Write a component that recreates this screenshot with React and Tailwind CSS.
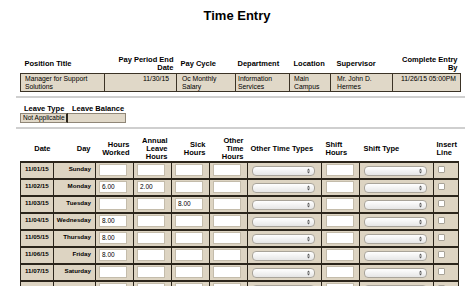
const font = { fontFamily: '"Liberation Sans", Arial, sans-serif' };

const infoCols = [
  { label: "Position Title", value: "Manager for Support Solutions", w: 84, head: "text-left pl-[4px]", cell: "text-left pl-[4px]" },
  { label: "Pay Period End Date", value: "11/30/15", w: 72, head: "text-right pr-[3px]", cell: "text-right pr-[7px]" },
  { label: "Pay Cycle", value: "Oc Monthly Salary", w: 59, head: "text-left pl-[4px]", cell: "text-left pl-[5px]" },
  { label: "Department", value: "Information Services", w: 54, head: "text-left pl-[2px]", cell: "text-left pl-[2px]" },
  { label: "Location", value: "Main Campus", w: 41, head: "text-left pl-[4px]", cell: "text-left pl-[4px]" },
  { label: "Supervisor", value: "Mr. John D. Hermes", w: 62, head: "text-left pl-[6px]", cell: "text-left pl-[6px]" },
  { label: "Complete Entry By", value: "11/26/15 05:00PM", w: 68, head: "text-right pr-[3px]", cell: "text-right pr-[4px]" },
];

const rows = [
  { date: "11/01/15", day: "Sunday" },
  { date: "11/02/15", day: "Monday", worked: "6.00", annual: "2.00" },
  { date: "11/03/15", day: "Tuesday", sick: "8.00" },
  { date: "11/04/15", day: "Wednesday", worked: "8.00" },
  { date: "11/05/15", day: "Thursday", worked: "8.00" },
  { date: "11/06/15", day: "Friday", worked: "8.00" },
  { date: "11/07/15", day: "Saturday" },
  { date: "11/08/15", day: "Sunday" },
];

function Box({ value }) {
  return (
    <div className="w-[28px] h-[12px] bg-white border border-[#c4bcab] pl-[2px] text-[6.5px] leading-[10px] font-normal text-black">
      {value || ""}
    </div>
  );
}

function Select() {
  return (
    <div className="w-[63px] h-[10px] mt-[2px] rounded-[4px] border border-[#a9a49a] bg-gradient-to-b from-white to-[#e6e6e6] flex items-center justify-end pr-[4px]">
      <svg width="3" height="6" viewBox="0 0 3 6">
        <path d="M0 2.4 L1.5 0.6 L3 2.4 Z M0 3.6 L1.5 5.4 L3 3.6 Z" fill="#555" />
      </svg>
    </div>
  );
}

const cell = "bg-[#ddd4c2] border-x border-[#2b251b] border-y-2 align-top";

export default function App() {
  return (
    <div className="w-[474px] h-[286px] overflow-hidden bg-white text-black" style={font}>
      <h1 className="text-center text-[13px] leading-[15px] font-bold pt-[8px] h-[56px]">Time Entry</h1>

      <table className="ml-[20px] border-collapse table-fixed w-[440px]">
        <colgroup>
          {infoCols.map((c) => (
            <col key={c.label} style={{ width: c.w }} />
          ))}
        </colgroup>
        <thead>
          <tr className="h-[17px]">
            {infoCols.map((c) => (
              <th key={c.label} className={`${c.head} align-middle text-[7.5px] leading-[8px] font-bold`}>
                {c.label}
              </th>
            ))}
          </tr>
        </thead>
        <tbody>
          <tr className="h-[18px]">
            {infoCols.map((c) => (
              <td
                key={c.label}
                className={`${c.cell} bg-[#e0d8c8] border border-[#3b3326] align-top pt-[1px] text-[6.8px] leading-[8px]`}
              >
                {c.value}
              </td>
            ))}
          </tr>
        </tbody>
      </table>

      <div className="ml-[16px] w-[449px] h-[2px] bg-[#cfcfcf] mt-[4px]" />

      <div className="ml-[20px] mt-[6px] flex text-[7.5px] leading-[9px] font-bold">
        <div className="w-[48px] pl-[4px]">Leave Type</div>
        <div className="pl-[4px]">Leave Balance</div>
      </div>
      <div className="ml-[20px] flex h-[10px]">
        <div className="w-[48px] bg-[#e0d8c8] border border-[#8f8677] border-r-2 border-r-[#2b251b] pl-[2px] text-[6.5px] leading-[8px] whitespace-nowrap">
          Not Applicable
        </div>
        <div className="w-[58px] bg-[#e0d8c8] border border-[#8f8677] border-l-0" />
      </div>

      <div className="ml-[16px] w-[449px] h-[2px] bg-[#cfcfcf] mt-[4px]" />

      <table className="ml-[20px] mt-[8px] border-collapse table-fixed w-[438px]">
        <colgroup>
          <col style={{ width: 33 }} />
          <col style={{ width: 42 }} />
          <col style={{ width: 38 }} />
          <col style={{ width: 38 }} />
          <col style={{ width: 38 }} />
          <col style={{ width: 38 }} />
          <col style={{ width: 74 }} />
          <col style={{ width: 38 }} />
          <col style={{ width: 74 }} />
          <col style={{ width: 25 }} />
        </colgroup>
        <thead>
          <tr className="h-[24px] text-[7.5px] leading-[8px] font-bold">
            <th className="text-right pr-[3px] align-middle">Date</th>
            <th className="text-right pr-[5px] align-middle">Day</th>
            <th className="text-right pr-[4px] align-middle">Hours<br />Worked</th>
            <th className="text-right pr-[4px] align-middle">Annual<br />Leave<br />Hours</th>
            <th className="text-right pr-[4px] align-middle">Sick<br />Hours</th>
            <th className="text-right pr-[4px] align-middle">Other<br />Time<br />Hours</th>
            <th className="text-left pl-[3px] align-middle">Other Time Types</th>
            <th className="text-left pl-[4px] align-middle">Shift<br />Hours</th>
            <th className="text-left pl-[4px] align-middle">Shift Type</th>
            <th className="text-left pl-[3px] align-middle">Insert<br />Line</th>
          </tr>
        </thead>
        <tbody>
          {rows.map((r) => (
            <tr key={r.date} className="h-[17px]">
              <td className={`${cell} pl-[4px] pt-[2px] text-[6.2px] leading-[8px] font-bold`}>{r.date}</td>
              <td className={`${cell} pr-[4px] pt-[2px] text-right text-[6.2px] leading-[8px] font-bold`}>{r.day}</td>
              <td className={`${cell} pl-[3px] pt-[1px]`}><Box value={r.worked} /></td>
              <td className={`${cell} pl-[3px] pt-[1px]`}><Box value={r.annual} /></td>
              <td className={`${cell} pl-[3px] pt-[1px]`}><Box value={r.sick} /></td>
              <td className={`${cell} pl-[3px] pt-[1px]`}><Box /></td>
              <td className={`${cell} pl-[4px] pt-[1px]`}><Select /></td>
              <td className={`${cell} pl-[4px] pt-[1px]`}><Box /></td>
              <td className={`${cell} pl-[4px] pt-[1px]`}><Select /></td>
              <td className={`${cell} pl-[4px] pt-[3px]`}>
                <div className="w-[7px] h-[7px] bg-white border border-[#a8a398] rounded-[1px]" />
              </td>
            </tr>
          ))}
        </tbody>
      </table>
    </div>
  );
}
